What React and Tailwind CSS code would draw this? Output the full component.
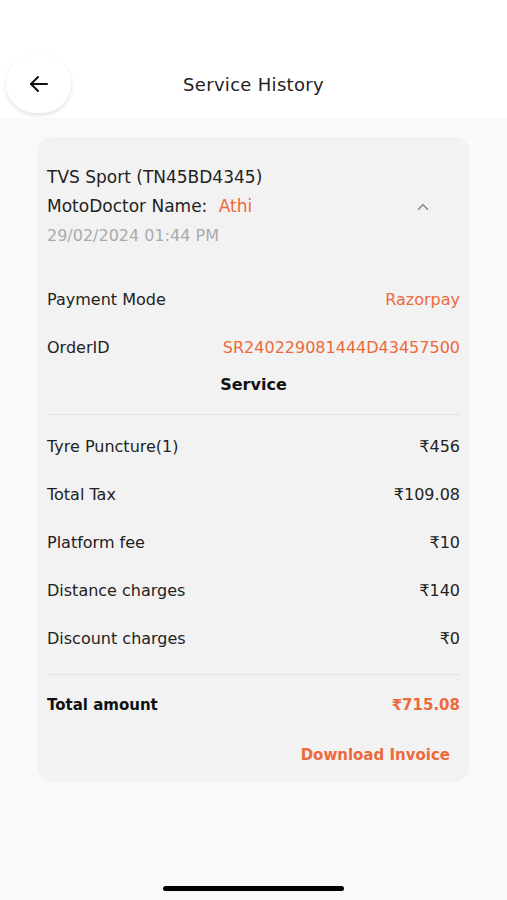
import React from 'react';

function Row({ label, value, accent }) {
  return (
    <div className="flex items-center justify-between h-[48px]">
      <span className="text-[16px] text-[#222]">{label}</span>
      <span className={accent ? "text-[16px] text-[#ec6a3c]" : "text-[16px] text-[#222]"}>{value}</span>
    </div>
  );
}

export default function App() {
  const charges = [
    { label: "Tyre Puncture(1)", value: "₹456" },
    { label: "Total Tax", value: "₹109.08" },
    { label: "Platform fee", value: "₹10" },
    { label: "Distance charges", value: "₹140" },
    { label: "Discount charges", value: "₹0" },
  ];

  return (
    <div className="min-h-[900px] w-[507px] bg-[#f9f9f9] flex flex-col" style={{ fontFamily: "'DejaVu Sans', 'Open Sans', sans-serif" }}>
      {/* header */}
      <div className="bg-white h-[118px] relative flex items-end">
        <div className="w-full h-[62px] flex items-start justify-center pt-[18px]">
          <h1 className="text-[18px] text-[#222] leading-[22px] tracking-[0.3px]">Service History</h1>
        </div>
        <button className="absolute left-[6px] top-[55px] w-[65px] h-[58px] rounded-full bg-white shadow-[0_2px_4px_rgba(0,0,0,0.12)] flex items-center justify-center">
          <svg width="24" height="24" viewBox="0 0 24 24" fill="none" stroke="#111" strokeWidth="2" strokeLinecap="round" strokeLinejoin="round">
            <path d="M20 12H4" />
            <path d="M11 5l-7 7 7 7" />
          </svg>
        </button>
      </div>

      {/* card */}
      <div className="px-[37px] pt-[19px]">
        <div className="bg-[#f2f2f2] rounded-[16px] px-[10px] pt-[25px] pb-[15px]">
          <div className="text-[17px] text-[#222] leading-[30px]">TVS Sport (TN45BD4345)</div>
          <div className="flex items-center justify-between h-[30px]">
            <div className="text-[17px] text-[#222]">
              MotoDoctor Name: <span className="ml-[6px] text-[#ec6a3c]">Athi</span>
            </div>
            <svg className="mr-[28px]" width="18" height="18" viewBox="0 0 24 24" fill="none" stroke="#8a8a8a" strokeWidth="2.2" strokeLinecap="round" strokeLinejoin="round">
              <path d="M6 15l6-6 6 6" />
            </svg>
          </div>
          <div className="text-[16px] text-[#aaa] leading-[28px]">29/02/2024 01:44 PM</div>

          <div className="mt-[26px]">
            <Row label="Payment Mode" value="Razorpay" accent />
            <Row label="OrderID" value="SR240229081444D43457500" accent />
          </div>
          <div className="text-center text-[16px] font-bold text-[#111] mt-[1px] leading-[24px]">Service</div>
          <div className="border-t border-[#e2e2e2] mt-[17px] mb-[8px]" />

          {charges.map((c) => (
            <Row key={c.label} label={c.label} value={c.value} />
          ))}

          <div className="border-t border-[#e2e2e2] mt-[11px]" />
          <div className="flex items-center justify-between h-[60px]">
            <span className="text-[15px] font-bold text-[#111]">Total amount</span>
            <span className="text-[15px] font-bold text-[#ec6a3c]">₹715.08</span>
          </div>
          <div className="flex justify-end pr-[10px] pt-[8px]">
            <span className="text-[15px] font-bold text-[#ec6a3c] leading-[24px]">Download Invoice</span>
          </div>
        </div>
      </div>

      <div className="flex-1" />
      <div className="flex justify-center pb-[9px]">
        <div className="w-[181px] h-[5px] rounded-full bg-black" />
      </div>
    </div>
  );
}
